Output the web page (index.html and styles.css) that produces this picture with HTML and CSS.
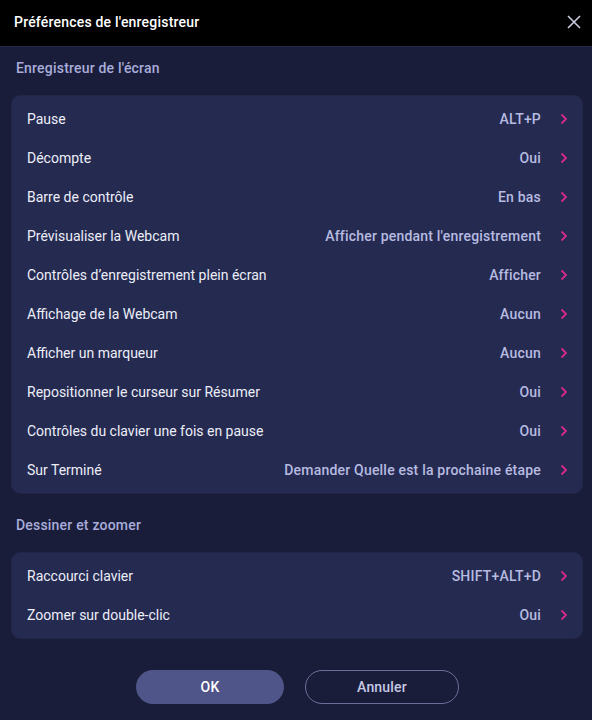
FILE: index.html
```html
<!DOCTYPE html>
<html lang="fr">
<head>
<meta charset="utf-8">
<link rel="stylesheet" href="styles.css">
</head>
<body>
<div class="dialog">
  <header class="titlebar">
    <span class="title">Préférences de l'enregistreur</span>
    <svg class="close" width="14" height="14" viewBox="0 0 14 14"><path d="M1 1L13 13M13 1L1 13" stroke="#c9cce0" stroke-width="1.6" fill="none"/></svg>
  </header>
  <main class="content">
    <h2 class="section">Enregistreur de l'écran</h2>
    <div class="card">
      <div class="row"><span class="label">Pause</span><span class="value">ALT+P</span><svg class="chev" viewBox="0 0 8 12"><path d="M1.5 1.5L6 6L1.5 10.5" /></svg></div>
      <div class="row"><span class="label">Décompte</span><span class="value">Oui</span><svg class="chev" viewBox="0 0 8 12"><path d="M1.5 1.5L6 6L1.5 10.5" /></svg></div>
      <div class="row"><span class="label">Barre de contrôle</span><span class="value">En bas</span><svg class="chev" viewBox="0 0 8 12"><path d="M1.5 1.5L6 6L1.5 10.5" /></svg></div>
      <div class="row"><span class="label">Prévisualiser la Webcam</span><span class="value">Afficher pendant l'enregistrement</span><svg class="chev" viewBox="0 0 8 12"><path d="M1.5 1.5L6 6L1.5 10.5" /></svg></div>
      <div class="row"><span class="label">Contrôles d’enregistrement plein écran</span><span class="value">Afficher</span><svg class="chev" viewBox="0 0 8 12"><path d="M1.5 1.5L6 6L1.5 10.5" /></svg></div>
      <div class="row"><span class="label">Affichage de la Webcam</span><span class="value">Aucun</span><svg class="chev" viewBox="0 0 8 12"><path d="M1.5 1.5L6 6L1.5 10.5" /></svg></div>
      <div class="row"><span class="label">Afficher un marqueur</span><span class="value">Aucun</span><svg class="chev" viewBox="0 0 8 12"><path d="M1.5 1.5L6 6L1.5 10.5" /></svg></div>
      <div class="row"><span class="label">Repositionner le curseur sur Résumer</span><span class="value">Oui</span><svg class="chev" viewBox="0 0 8 12"><path d="M1.5 1.5L6 6L1.5 10.5" /></svg></div>
      <div class="row"><span class="label">Contrôles du clavier une fois en pause</span><span class="value">Oui</span><svg class="chev" viewBox="0 0 8 12"><path d="M1.5 1.5L6 6L1.5 10.5" /></svg></div>
      <div class="row"><span class="label">Sur Terminé</span><span class="value">Demander Quelle est la prochaine étape</span><svg class="chev" viewBox="0 0 8 12"><path d="M1.5 1.5L6 6L1.5 10.5" /></svg></div>
    </div>
    <h2 class="section">Dessiner et zoomer</h2>
    <div class="card">
      <div class="row"><span class="label">Raccourci clavier</span><span class="value">SHIFT+ALT+D</span><svg class="chev" viewBox="0 0 8 12"><path d="M1.5 1.5L6 6L1.5 10.5" /></svg></div>
      <div class="row"><span class="label">Zoomer sur double-clic</span><span class="value">Oui</span><svg class="chev" viewBox="0 0 8 12"><path d="M1.5 1.5L6 6L1.5 10.5" /></svg></div>
    </div>
  </main>
  <footer class="actions">
    <button class="btn btn-ok">OK</button>
    <button class="btn btn-cancel">Annuler</button>
  </footer>
</div>
</body>
</html>
```

FILE: styles.css
```css
html, body {
  margin: 0;
  padding: 0;
  background: #1a1d3a;
}
body {
  width: 592px;
  height: 720px;
  overflow: hidden;
  font-family: Roboto, "Liberation Sans", sans-serif;
  font-size: 14px;
}
.dialog {
  display: flex;
  flex-direction: column;
  height: 720px;
}
.titlebar {
  height: 47px;
  background: #000000;
  display: flex;
  align-items: center;
  justify-content: space-between;
  padding: 0 11px 0 14px;
  border-bottom: 1px solid #262a4a;
  box-sizing: border-box;
}
.title {
  color: #ffffff;
  font-weight: 500;
  font-size: 14px;
  letter-spacing: 0.2px;
  margin-top: -3px;
}
.close {
  width: 14px;
  height: 14px;
  margin-top: -2px;
}
.content {
  padding: 0 10px 0 12px;
  display: flex;
  flex-direction: column;
}
.section {
  margin: 0;
  font-size: 14px;
  font-weight: 500;
  letter-spacing: 0.2px;
  color: #a8addb;
  padding: 13px 0 0 4px;
  height: 36px;
  line-height: 17px;
}
.card + .section {
  padding-top: 24px;
  height: 36px;
}
.card {
  background: #252a51;
  border-radius: 8px;
  padding: 3px 0 4px;
  box-shadow: 0 0 0 1px rgba(45, 50, 92, 0.4);
}
.row {
  height: 39px;
  display: flex;
  align-items: center;
  padding: 0 14px 0 15px;
}
.label {
  color: #eceef8;
  flex: 1;
}
.value {
  color: #b7bbe0;
  font-weight: 500;
  letter-spacing: 0.2px;
}
.chev {
  width: 8px;
  height: 12px;
  margin-left: 19px;
  fill: none;
  stroke: #d92a8c;
  stroke-width: 1.8;
}
.actions {
  margin-top: auto;
  display: flex;
  justify-content: center;
  gap: 21px;
  padding: 0 0 16px 3px;
}
.btn {
  height: 34px;
  border-radius: 17px;
  font-family: Roboto, "Liberation Sans", sans-serif;
  font-size: 14px;
  font-weight: 500;
  letter-spacing: 0.2px;
  cursor: pointer;
}
.btn-ok {
  width: 148px;
  background: #4f5588;
  color: #ffffff;
  border: none;
}
.btn-cancel {
  width: 154px;
  background: transparent;
  color: #c6c9e6;
  border: 1px solid #6b7099;
}
```
